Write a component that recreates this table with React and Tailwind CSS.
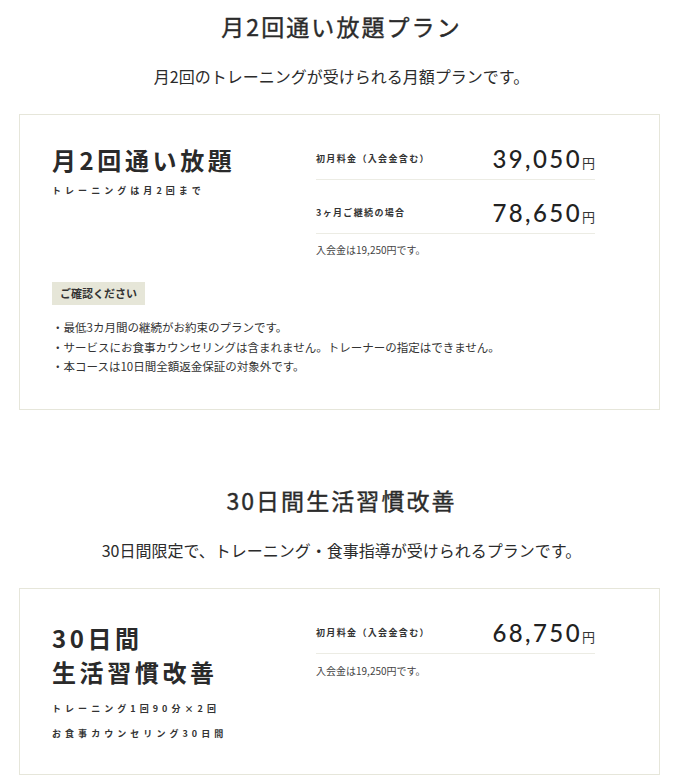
const jp = "font-['Noto_Sans_CJK_JP',sans-serif]";

function PriceRow({ label, price, first }) {
  return (
    <div
      className={`flex items-center justify-between border-b border-[#ecece4] pb-2 ${
        first ? "" : "pt-[21px]"
      }`}
    >
      <span className="text-[9px] font-bold tracking-[0.15em] text-[#333]">{label}</span>
      <span className="flex items-baseline h-6 leading-6">
        <span className="font-['Lato',sans-serif] font-medium text-[24px] tracking-[0.1em] text-[#222]">
          {price}
        </span>
        <span className="text-[13px] text-[#333]">円</span>
      </span>
    </div>
  );
}

function SectionHead({ title, lead }) {
  return (
    <div className="text-center text-[#2b2b2b]">
      <h2 className="text-[23px] leading-8 font-normal tracking-[0.09em] [-webkit-text-stroke:0.4px_#2b2b2b]">
        {title}
      </h2>
      <p className="mt-[22px] text-[16px] leading-6">{lead}</p>
    </div>
  );
}

export default function App() {
  return (
    <div className={`w-full min-h-screen bg-white ${jp} text-[#333] pt-[10px]`}>
      {/* 月2回通い放題プラン */}
      <SectionHead title="月2回通い放題プラン" lead="月2回のトレーニングが受けられる月額プランです。" />
      <div className="ml-[19px] w-[641px] mt-[26px] border border-[#e6e6da] pl-8 pr-16 pt-8 pb-8">
        <div className="flex">
          <div className="w-[264px]">
            <h3 className="text-[24px] leading-[26px] font-bold tracking-[0.15em] text-[#2a2a2a]">
              月2回通い放題
            </h3>
            <p className="mt-[11px] text-[9px] leading-[14px] font-bold tracking-[0.45em]">
              トレーニングは月2回まで
            </p>
          </div>
          <div className="flex-1">
            <PriceRow first label="初月料金（入会金含む）" price="39,050" />
            <PriceRow label="3ヶ月ご継続の場合" price="78,650" />
            <p className="mt-[9px] text-[10px] leading-[14px] text-[#444]">入会金は19,250円です。</p>
          </div>
        </div>
        <div className="mt-[25px] inline-flex h-[23px] items-center bg-[#e6e6d8] px-2 text-[11px] font-bold">
          ご確認ください
        </div>
        <ul className="mt-[13px] text-[11.5px] leading-[19.5px]">
          <li>・最低3カ月間の継続がお約束のプランです。</li>
          <li>・サービスにお食事カウンセリングは含まれません。トレーナーの指定はできません。</li>
          <li>・本コースは10日間全額返金保証の対象外です。</li>
        </ul>
      </div>

      {/* 30日間生活習慣改善 */}
      <div className="mt-[74px]">
        <SectionHead
          title="30日間生活習慣改善"
          lead="30日間限定で、トレーニング・食事指導が受けられるプランです。"
        />
      </div>
      <div className="ml-[19px] w-[641px] mt-[26px] border border-[#e6e6da] pl-8 pr-16 pt-8 pb-[33px]">
        <div className="flex">
          <div className="w-[264px]">
            <h3 className="text-[24px] leading-[34px] font-bold tracking-[0.15em] text-[#2a2a2a]">
              30日間
              <br />
              生活習慣改善
            </h3>
            <p className="mt-[13px] text-[9px] leading-[14px] font-bold tracking-[0.45em]">
              トレーニング1回90分×2回
            </p>
            <p className="mt-[11px] text-[9px] leading-[14px] font-bold tracking-[0.45em]">
              お食事カウンセリング30日間
            </p>
          </div>
          <div className="flex-1">
            <PriceRow first label="初月料金（入会金含む）" price="68,750" />
            <p className="mt-[10px] text-[10px] leading-[14px] text-[#444]">入会金は19,250円です。</p>
          </div>
        </div>
      </div>
    </div>
  );
}
